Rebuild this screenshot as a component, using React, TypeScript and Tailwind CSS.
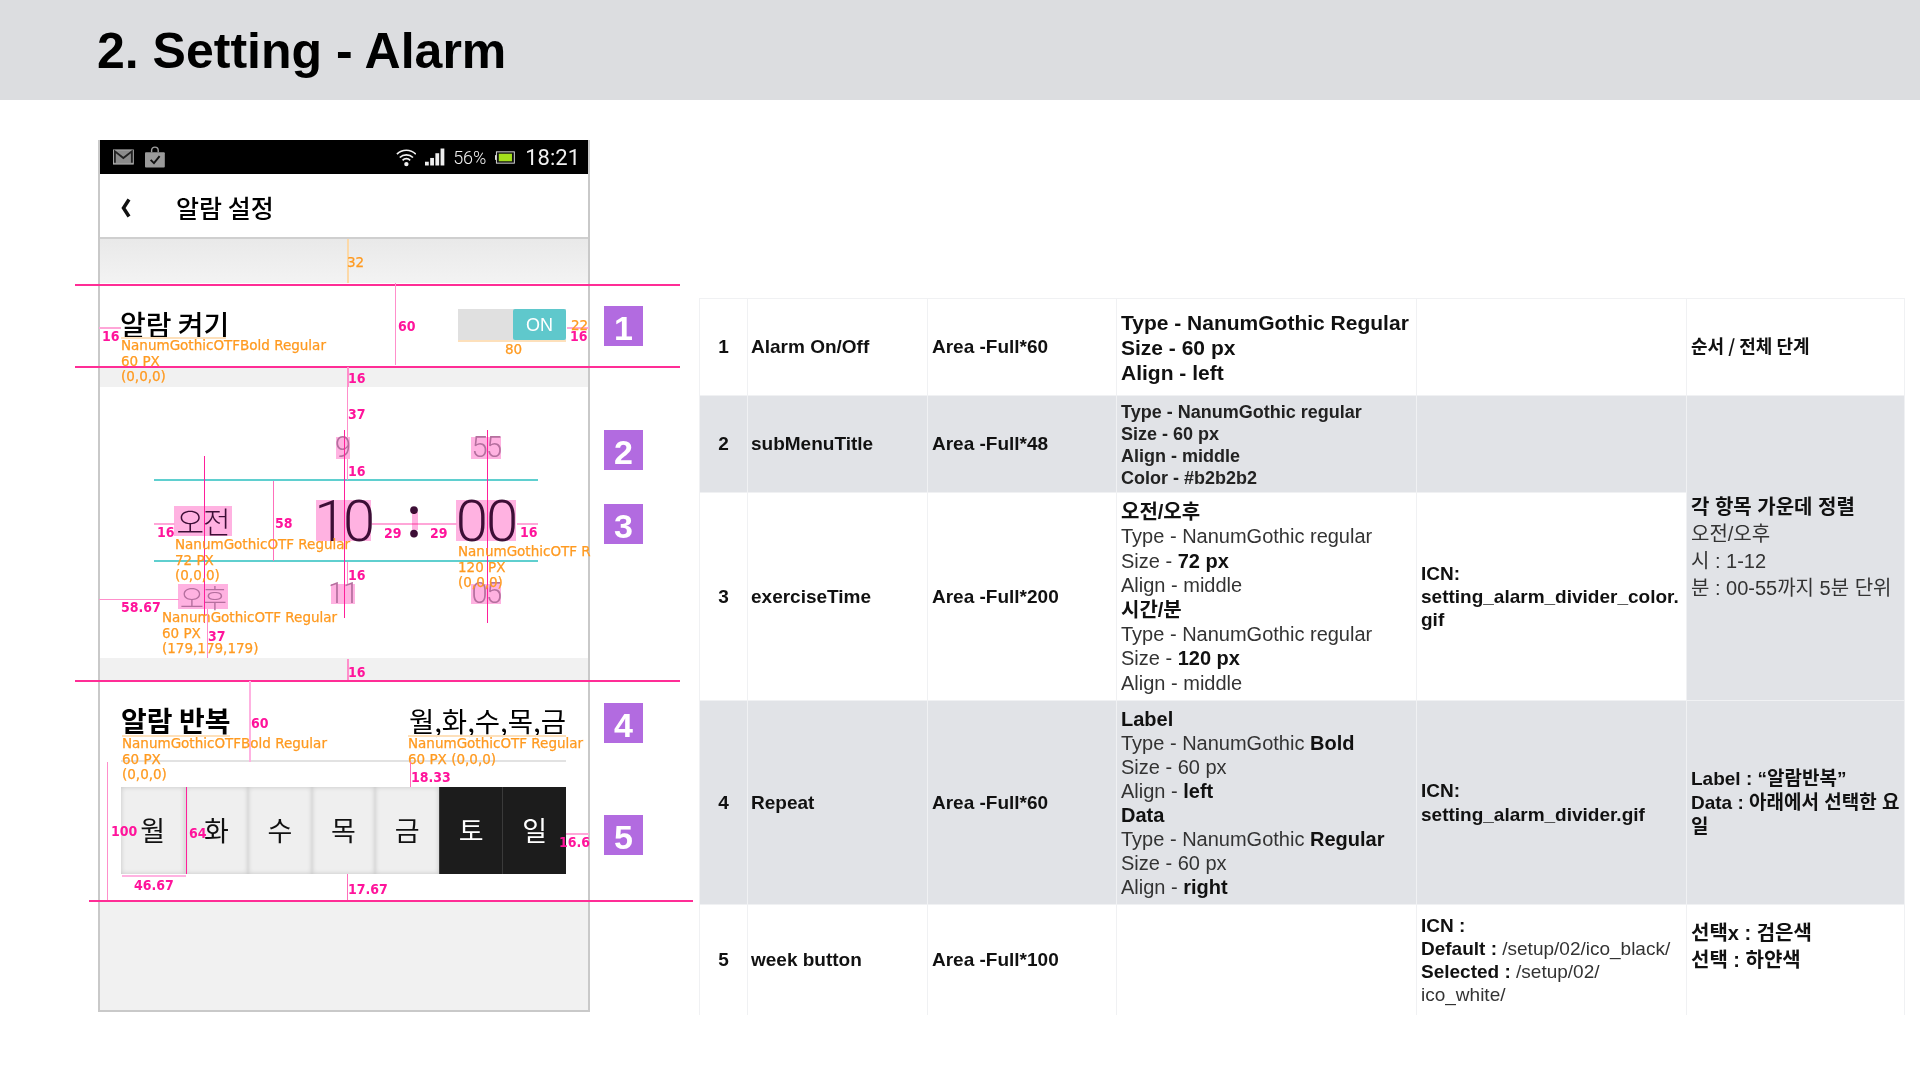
import type { ReactNode } from 'react';

const sans = "font-['Liberation_Sans','Noto_Sans_CJK_KR',sans-serif]";
const kr = "font-['Noto_Sans_CJK_KR',sans-serif]";

function Pink({ className, children }: { className: string; children: ReactNode }) {
  return <span className={`absolute whitespace-nowrap font-['DejaVu_Sans_Condensed','DejaVu_Sans',sans-serif] text-[14px] font-bold leading-4 text-[#ff149b] ${className}`}>{children}</span>;
}

function Orange({ className, children }: { className: string; children: ReactNode }) {
  return <span className={`absolute whitespace-nowrap font-['DejaVu_Sans',sans-serif] text-[13.500px] leading-[15.500px] text-[#ff9a20] [-webkit-text-stroke:0.25px_#ff9a20] ${className}`}>{children}</span>;
}

function Line({ className }: { className: string }) {
  return <div className={`absolute ${className}`} />;
}

function Badge({ n, className }: { n: number; className: string }) {
  return (
    <div className={`flex h-10 w-[39px] items-center justify-center bg-[#b26be0] pt-1 font-['Liberation_Sans_Narrow','Liberation_Sans',sans-serif] text-[34px] font-bold text-white ${className}`}>
      {n}
    </div>
  );
}

function StatusBar() {
  return (
    <div className="flex h-[34px] items-center bg-black pl-[13px] pr-2 text-[#f0f0f0]">
      <svg width="22" height="16" viewBox="0 0 22 16" className="mr-[11px]">
        <rect x="0.5" y="0.5" width="21" height="15" fill="#8c8c8c" stroke="#b5b5b5" />
        <path d="M2 14V2l9 7 9-7v12" fill="none" stroke="#222" strokeWidth="2" />
      </svg>
      <svg width="21" height="22" viewBox="0 0 21 22">
        <path d="M7 6V4a3.500 3.500 0 0 1 7 0v2" fill="none" stroke="#a0a0a0" strokeWidth="1.500" />
        <rect x="0" y="6" width="21" height="16" rx="1" fill="#9a9a9a" />
        <path d="M6 14l3.500 3.500L15.500 10" fill="none" stroke="#111" strokeWidth="2" />
      </svg>
      <svg width="22" height="19" viewBox="0 0 22 19" className="ml-[231px]">
        <path d="M1 6a14 14 0 0 1 20 0M4 9.500a10 10 0 0 1 14 0M7 12.500a5.500 5.500 0 0 1 8 0" fill="none" stroke="#f2f2f2" strokeWidth="1.800" />
        <circle cx="11" cy="16.500" r="2.300" fill="#f2f2f2" />
      </svg>
      <svg width="21" height="18" viewBox="0 0 21 18" className="ml-[9px]">
        <rect x="0" y="14" width="4" height="4" fill="#eee" />
        <rect x="5.500" y="10" width="4" height="8" fill="#eee" />
        <rect x="11" y="5" width="4" height="13" fill="#eee" />
        <rect x="16.500" y="0" width="4" height="18" fill="#eee" />
      </svg>
      <span className="ml-2 font-['Roboto',sans-serif] text-[18px] font-light">56%</span>
      <svg width="21" height="13" viewBox="0 0 21 13" className="ml-[9px]">
        <rect x="1.500" y="0.500" width="19" height="12" fill="#111" stroke="#ddd" />
        <rect x="0" y="4" width="1.500" height="5" fill="#ddd" />
        <rect x="4" y="2.500" width="14" height="8" fill="#a4e01c" />
      </svg>
      <span className="ml-[10px] font-['Roboto',sans-serif] text-[22px]">18:21</span>
    </div>
  );
}

function TimeBox({ children, className }: { children: ReactNode; className: string }) {
  return <span className={`flex items-center justify-center bg-[#ffb2e1] ${className}`}>{children}</span>;
}

const days = ['월', '화', '수', '목', '금', '토', '일'];

function Phone() {
  return (
    <div className={`-ml-px h-[872px] w-[492px] shrink-0 border-2 border-t-0 border-[#c9c9c9] bg-[#f1f1f1] ${kr}`}>
      <StatusBar />
      <div className="flex h-[65px] items-center border-b-2 border-[#cfcfcf] bg-white pl-5 pt-1 text-black">
        <svg width="11" height="20" viewBox="0 0 11 20">
          <path d="M9 1.500L3.500 10 9 18.500" fill="none" stroke="#111" strokeWidth="3.500" />
        </svg>
        <span className="ml-[45px] text-[25px] font-medium leading-none">알람 설정</span>
      </div>
      <div className="h-[44px] bg-gradient-to-b from-[#e9e9e9] to-[#f3f3f3]" />

      <div className="flex h-[84px] items-start justify-between bg-white pl-5 pr-[22px] pt-[26px]">
        <span className="-mt-[6px] text-[28px] font-medium leading-[42px] text-black">알람 켜기</span>
        <div className="flex h-[31px] w-[108px] justify-end bg-[#e0e0e0]">
          <span className={`flex w-[53px] items-center justify-center rounded-[2px] bg-[#5fc8cc] pt-0.5 text-[18px] text-white ${sans}`}>ON</span>
        </div>
      </div>
      <div className="h-5 bg-[#f1f1f1]" />

      <div className={`grid h-[271px] grid-cols-[206px_74px_68px_76px] grid-rows-[93px_81px_97px] justify-items-center bg-white ${sans}`}>
        <span />
        <div className="self-end pb-[21px]">
          <TimeBox className="h-[22px] w-[14px] font-['Roboto',sans-serif] text-[29px] font-light text-[#b56f9e]">9</TimeBox>
        </div>
        <span />
        <div className="self-end pb-[21px]">
          <TimeBox className="h-[22px] w-[30px] font-['Roboto',sans-serif] text-[29px] font-light tracking-[-1.500px] text-[#b56f9e]">55</TimeBox>
        </div>

        <div className="self-center">
          <TimeBox className={`h-[30px] w-[58px] text-[30px] font-light tracking-[-1px] text-[#3d0e36] ${kr}`}>오전</TimeBox>
        </div>
        <div className="self-center">
          <TimeBox className="h-[41px] w-[55px] pt-0.5 font-['Roboto',sans-serif] text-[58px] font-light tracking-[-3.500px] text-[#3d0e36]">10</TimeBox>
        </div>
        <div className="-translate-y-2 self-center font-['Lato',sans-serif] text-[62px] leading-none text-[#3d0e36]">:</div>
        <div className="self-center">
          <TimeBox className="h-[41px] w-[60px] pt-0.5 font-['Roboto',sans-serif] text-[58px] font-light tracking-[-2px] text-[#3d0e36]">00</TimeBox>
        </div>

        <div className="pt-[23px]">
          <TimeBox className={`h-[25px] w-[50px] text-[26px] font-light tracking-[-1px] text-[#b56f9e] ${kr}`}>오후</TimeBox>
        </div>
        <div className="pt-[23px]">
          <TimeBox className="h-5 w-6 font-['Roboto',sans-serif] text-[29px] font-light tracking-[-1px] text-[#b56f9e]">11</TimeBox>
        </div>
        <span />
        <div className="pt-[23px]">
          <TimeBox className="h-5 w-[30px] font-['Roboto',sans-serif] text-[29px] font-light tracking-[-1.500px] text-[#b56f9e]">05</TimeBox>
        </div>
      </div>
      <div className="h-[22px] bg-[#f1f1f1]" />

      <div className="h-[220px] bg-white pl-[21px] pr-[22px] pt-[22px]">
        <div className="flex h-[60px] items-start justify-between border-b-2 border-[#e2e2e2] text-black">
          <span className="text-[28px] font-bold leading-[36px]">알람 반복</span>
          <span className="text-[27.500px] leading-[36px]">월,화,수,목,금</span>
        </div>
        <div className="mt-[25px] grid h-[87px] grid-cols-7">
          {days.map((d, i) => (
            <div
              key={d}
              className={
                i < 5
                  ? 'flex items-center justify-center bg-[#efefef] text-[27px] text-[#111] shadow-[inset_0_0_5px_rgba(0,0,0,0.18)]'
                  : 'flex items-center justify-center border-l border-[#3a3a3a] bg-[#1c1c1c] text-[27px] text-white'
              }
            >
              {d}
            </div>
          ))}
        </div>
      </div>
    </div>
  );
}

function Cell({ children, className = '', rowSpan }: { children?: ReactNode; className?: string; rowSpan?: number }) {
  return <td rowSpan={rowSpan} className={`border border-[#f0f1f3] px-[4px] align-middle ${className}`}>{children}</td>;
}

const mainText = 'text-[19px] font-bold leading-[24px] text-[#111]';

function SpecTable() {
  return (
    <table className={`w-[1205px] table-fixed border-collapse ${sans}`}>
      <colgroup>
        <col className="w-[48px]" />
        <col className="w-[180px]" />
        <col className="w-[189px]" />
        <col className="w-[300px]" />
        <col className="w-[270px]" />
        <col className="w-[218px]" />
      </colgroup>
      <tbody>
        <tr className="h-[97px]">
          <Cell className={`text-center ${mainText}`}>1</Cell>
          <Cell className={`!pl-[3px] ${mainText}`}>Alarm On/Off</Cell>
          <Cell className={mainText}>Area -Full*60</Cell>
          <Cell className="text-[21px] font-bold leading-[25px] text-[#111]">
            Type - NanumGothic Regular<br />Size - 60 px<br />Align - left
          </Cell>
          <Cell />
          <Cell className={`pb-1 text-[18px] font-bold text-[#111] ${kr}`}>순서 / 전체 단계</Cell>
        </tr>
        <tr className="h-[97px] bg-[#e1e3e7]">
          <Cell className={`text-center ${mainText}`}>2</Cell>
          <Cell className={`!pl-[3px] ${mainText}`}>subMenuTitle</Cell>
          <Cell className={mainText}>Area -Full*48</Cell>
          <Cell className="pt-0.5 text-[18px] font-bold leading-[22px] text-[#222]">
            Type - NanumGothic regular<br />Size - 60 px<br />Align - middle<br />Color - #b2b2b2
          </Cell>
          <Cell />
          <Cell className="bg-[#e1e3e7] text-[20px] leading-[27px] text-[#333]" rowSpan={2}>
            <b className="text-[#111]">각 항목 가운데 정렬</b><br />오전/오후<br />시 : 1-12<br />분 : 00-55까지 5분 단위
          </Cell>
        </tr>
        <tr className="h-[208px]">
          <Cell className={`text-center ${mainText}`}>3</Cell>
          <Cell className={`!pl-[3px] ${mainText}`}>exerciseTime</Cell>
          <Cell className={mainText}>Area -Full*200</Cell>
          <Cell className="pt-0.5 text-[20px] leading-[24.400px] text-[#333]">
            <b className="text-[#111]">오전/오후</b><br />Type - NanumGothic regular<br />Size - <b className="text-[#111]">72 px</b><br />Align - middle<br />
            <b className="text-[#111]">시간/분</b><br />Type - NanumGothic regular<br />Size - <b className="text-[#111]">120 px</b><br />Align - middle
          </Cell>
          <Cell className={`${mainText} !leading-[23px]`}>ICN:<br />setting_alarm_divider_color.<br />gif</Cell>
        </tr>
        <tr className="h-[204px] bg-[#e1e3e7]">
          <Cell className={`text-center ${mainText}`}>4</Cell>
          <Cell className={`!pl-[3px] ${mainText}`}>Repeat</Cell>
          <Cell className={mainText}>Area -Full*60</Cell>
          <Cell className="text-[20px] leading-[24px] text-[#333]">
            <b className="text-[#111]">Label</b><br />Type - NanumGothic <b className="text-[#111]">Bold</b><br />Size - 60 px<br />Align - <b className="text-[#111]">left</b><br />
            <b className="text-[#111]">Data</b><br />Type - NanumGothic <b className="text-[#111]">Regular</b><br />Size - 60 px<br />Align - <b className="text-[#111]">right</b>
          </Cell>
          <Cell className={mainText}>ICN:<br />setting_alarm_divider.gif</Cell>
          <Cell className={mainText}>Label : “알람반복”<br />Data : 아래에서 선택한 요일</Cell>
        </tr>
        <tr className="h-[110px] [&>td]:border-b-0">
          <Cell className={`text-center ${mainText}`}>5</Cell>
          <Cell className={`!pl-[3px] ${mainText}`}>week button</Cell>
          <Cell className={mainText}>Area -Full*100</Cell>
          <Cell />
          <Cell className="text-[19px] leading-[23px] text-[#333]">
            <b className="text-[#111]">ICN :</b><br /><b className="text-[#111]">Default :</b> /setup/02/ico_black/<br /><b className="text-[#111]">Selected :</b> /setup/02/<br />ico_white/
          </Cell>
          <Cell className={`${mainText} pb-[26px] !text-[20px] !leading-[27px]`}>선택x : 검은색<br />선택 : 하얀색</Cell>
        </tr>
      </tbody>
    </table>
  );
}

function Annotations() {
  return (
    <div className="pointer-events-none absolute inset-0">
      {/* section guides */}
      <Line className="left-[75px] top-[284px] h-[2px] w-[605px] bg-[#ff2d96]" />
      <Line className="left-[75px] top-[366px] h-[2px] w-[605px] bg-[#ff2d96]" />
      <Line className="left-[75px] top-[680px] h-[2px] w-[605px] bg-[#ff2d96]" />
      <Line className="left-[89px] top-[900px] h-[2px] w-[604px] bg-[#ff2d96]" />
      <Line className="left-[154px] top-[479px] h-[2px] w-[384px] bg-[#5fcfcf]" />
      <Line className="left-[154px] top-[560px] h-[2px] w-[384px] bg-[#5fcfcf]" />

      {/* alarm on row */}
      <Line className="left-[347px] top-[239px] h-[44px] w-[2px] bg-[#fcd9a8]" />
      <Orange className="left-[347px] top-[255px]">32</Orange>
      <Line className="left-[395px] top-[283px] h-[82px] w-px bg-[#ff8fcb]" />
      <Pink className="left-[398px] top-[318px]">60</Pink>
      <Line className="left-[99px] top-[327px] h-[2px] w-[22px] bg-[#ffa6d8]" />
      <Pink className="left-[102px] top-[328px]">16</Pink>
      <Line className="left-[121px] top-[337px] h-[2px] w-[105px] bg-[#fde0bb]" />
      <Line className="left-[458px] top-[340px] h-[2px] w-[108px] bg-[#fde0bb]" />
      <Line className="left-[567px] top-[327px] h-[2px] w-[22px] bg-[#ffa6d8]" />
      <Orange className="left-[571px] top-[318px]">22</Orange>
      <Pink className="left-[570px] top-[328px]">16</Pink>
      <Orange className="left-[505px] top-[342px]">80</Orange>
      <Orange className="left-[121px] top-[338px]">NanumGothicOTFBold Regular<br />60 PX<br />(0,0,0)</Orange>
      <Line className="left-[347px] top-[367px] h-5 w-[2px] bg-[#ff8fcb]" />
      <Pink className="left-[348px] top-[370px]">16</Pink>

      {/* time picker */}
      <Line className="left-[347px] top-[387px] h-[50px] w-px bg-[#ff8fcb]" />
      <Pink className="left-[348px] top-[406px]">37</Pink>
      <Line className="left-[344px] top-[430px] h-[188px] w-px bg-[#ff1f9a]" />
      <Line className="left-[487px] top-[430px] h-[193px] w-px bg-[#ff1f9a]" />
      <Line className="left-[204px] top-[456px] h-[167px] w-px bg-[#ff1f9a]" />
      <Line className="left-[347px] top-[459px] h-[21px] w-px bg-[#ff8fcb]" />
      <Pink className="left-[348px] top-[463px]">16</Pink>
      <Line className="left-[273px] top-[481px] h-[80px] w-px bg-[#ff6fbb]" />
      <Pink className="left-[275px] top-[515px]">58</Pink>
      <Line className="left-[154px] top-[523px] h-[2px] w-[21px] bg-[#ffa6d8]" />
      <Pink className="left-[157px] top-[524px]">16</Pink>
      <Line className="left-[372px] top-[523px] h-[2px] w-[85px] bg-[#ffa6d8]" />
      <Line className="left-[412px] top-[512px] h-[18px] w-[6px] bg-[#ffb2e1] mix-blend-multiply" />
      <Pink className="left-[384px] top-[525px]">29</Pink>
      <Pink className="left-[430px] top-[525px]">29</Pink>
      <Line className="left-[517px] top-[523px] h-[2px] w-[21px] bg-[#ffa6d8]" />
      <Pink className="left-[520px] top-[524px]">16</Pink>
      <Orange className="left-[175px] top-[537px]">NanumGothicOTF Regular<br />72 PX<br />(0,0,0)</Orange>
      <Orange className="left-[458px] top-[544px]">NanumGothicOTF R<br />120 PX<br />(0,0,0)</Orange>
      <Line className="left-[347px] top-[562px] h-[22px] w-px bg-[#ff8fcb]" />
      <Pink className="left-[348px] top-[567px]">16</Pink>
      <Line className="left-[99px] top-[599px] h-px w-[80px] bg-[#ff8fcb]" />
      <Pink className="left-[121px] top-[599px]">58.67</Pink>
      <Orange className="left-[162px] top-[610px]">NanumGothicOTF Regular<br />60 PX<br />(179,179,179)</Orange>
      <Line className="left-[207px] top-[609px] h-[49px] w-px bg-[#ff8fcb]" />
      <Pink className="left-[208px] top-[628px]">37</Pink>
      <Line className="left-[347px] top-[659px] h-[21px] w-[2px] bg-[#ff8fcb]" />
      <Pink className="left-[348px] top-[664px]">16</Pink>

      {/* repeat row */}
      <Line className="left-[249px] top-[681px] h-[81px] w-[2px] bg-[#ffb2e1]" />
      <Pink className="left-[251px] top-[715px]">60</Pink>
      <Line className="left-[122px] top-[735px] h-[2px] w-[108px] bg-[#fde0bb]" />
      <Line className="left-[408px] top-[735px] h-[2px] w-[158px] bg-[#fde0bb]" />
      <Orange className="left-[122px] top-[736px]">NanumGothicOTFBold Regular<br />60 PX<br />(0,0,0)</Orange>
      <Orange className="left-[408px] top-[736px]">NanumGothicOTF Regular<br />60 PX (0,0,0)</Orange>
      <Line className="left-[410px] top-[762px] h-[25px] w-px bg-[#ff6fbb]" />
      <Pink className="left-[411px] top-[769px]">18.33</Pink>
      <Line className="left-[107px] top-[762px] h-[138px] w-px bg-[#ff8fcb]" />
      <Pink className="left-[111px] top-[823px]">100</Pink>
      <Line className="left-[186px] top-[787px] h-[87px] w-px bg-[#ff1f9a]" />
      <Pink className="left-[189px] top-[825px]">64</Pink>
      <Line className="left-[122px] top-[875px] h-[2px] w-[64px] bg-[#ffb2e1]" />
      <Pink className="left-[134px] top-[877px]">46.67</Pink>
      <Line className="left-[347px] top-[874px] h-[26px] w-px bg-[#ff6fbb]" />
      <Pink className="left-[348px] top-[881px]">17.67</Pink>
      <Line className="left-[566px] top-[833px] h-[2px] w-[23px] bg-[#ffa6d8]" />
      <Pink className="left-[559px] top-[834px]">16.6</Pink>
    </div>
  );
}

export default function App() {
  return (
    <div className={`relative h-[1080px] w-[1920px] overflow-hidden bg-white ${sans}`}>
      <header className="flex h-[100px] items-center bg-[#dcdde0] pl-[97px] pt-0.5">
        <h1 className="text-[50px] font-bold text-black">2. Setting - Alarm</h1>
      </header>
      <main className="flex pl-[99px] pt-10">
        <Phone />
        <div className="ml-[14px] flex w-[39px] flex-col pt-[166px]">
          <Badge n={1} className="" />
          <Badge n={2} className="mt-[84px]" />
          <Badge n={3} className="mt-[34px]" />
          <Badge n={4} className="mt-[159px]" />
          <Badge n={5} className="mt-[72px]" />
        </div>
        <div className="ml-[56px] pt-[158px]">
          <SpecTable />
        </div>
      </main>
      <Annotations />
    </div>
  );
}
